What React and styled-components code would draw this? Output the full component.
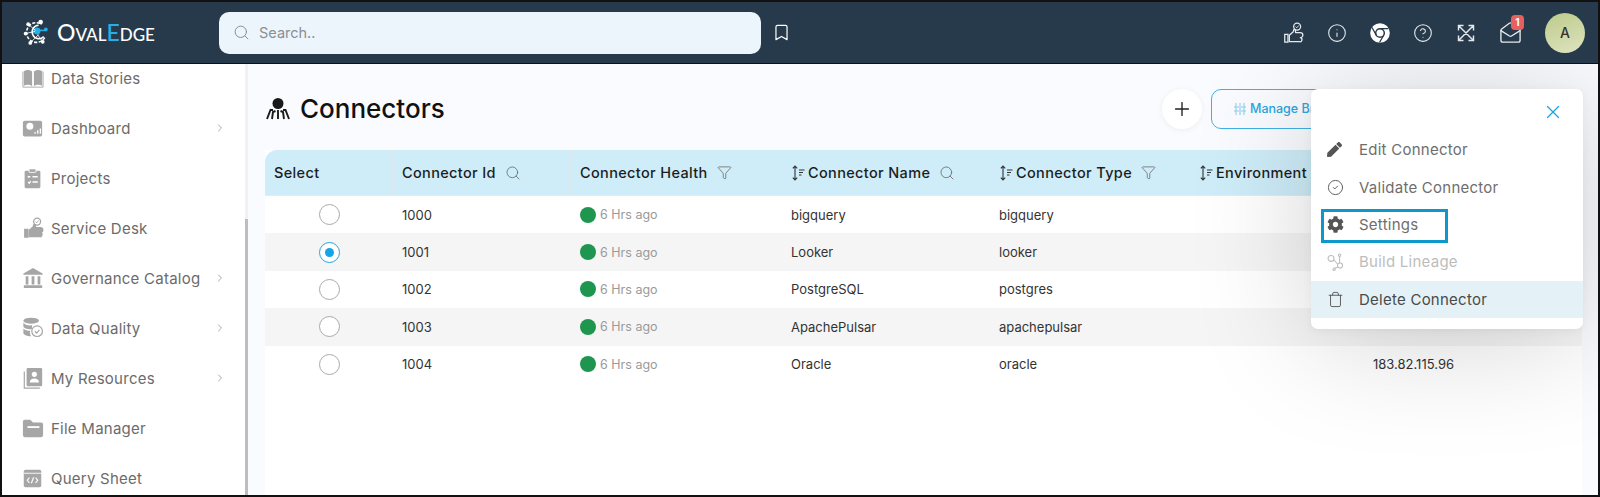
import styled, { createGlobalStyle } from "styled-components";
import {
	Search,
	Bookmark,
	Info,
	CircleHelp,
	MailOpen,
	ChevronRight,
	Plus,
	X,
	Funnel,
	CircleCheck,
	Trash,
} from "lucide-react";
import { FaCog, FaPen } from "react-icons/fa";

const GlobalStyle = createGlobalStyle`
	html, body {
		margin: 0;
		height: 100%;
	}
	body {
		font-family: "Inter", "Open Sans", sans-serif;
		background: #fff;
	}
	* { box-sizing: border-box; }
`;

const Page = styled.div`
	width: 1600px;
	height: 497px;
	border: 2px solid #111;
	display: flex;
	flex-direction: column;
	overflow: hidden;
	position: relative;
`;

const TopBar = styled.header`
	height: 62px;
	flex: none;
	background: #273a4b;
	border-bottom: 1px solid #111;
	display: flex;
	align-items: center;
	padding: 0 13px 0 21px;
	position: relative;
	z-index: 2;
`;

const Logo = styled.div`
	width: 196px;
	display: flex;
	align-items: center;
	gap: 7px;
	color: #fff;
	font-size: 17px;
	font-weight: 500;
	font-family: "Lato", sans-serif;
`;

const LogoBig = styled.span`
	font-size: 23px;
	line-height: 1;
	color: ${(p) => p.$color || "#fff"};
`;

const SearchBox = styled.div`
	width: 542px;
	height: 42px;
	background: #edf5fc;
	border-radius: 10px;
	display: flex;
	align-items: center;
	gap: 9px;
	padding: 0 14px;
	color: #8a8f94;
	font-size: 14.5px;
`;

const BookmarkWrap = styled.div`
	margin-left: 11px;
	display: flex;
	color: #fff;
`;

const TopIcons = styled.div`
	margin-left: auto;
	display: flex;
	align-items: center;
	gap: 23px;
	color: #e6e9ec;
`;

const MailWrap = styled.div`
	position: relative;
	display: flex;
`;

const Badge = styled.span`
	position: absolute;
	top: -6px;
	right: -2px;
	width: 13px;
	height: 15px;
	border-radius: 4px;
	background: #e5605f;
	color: #fff;
	font-size: 10px;
	font-weight: 700;
	text-align: center;
	line-height: 15px;
`;

const Avatar = styled.div`
	width: 40px;
	height: 40px;
	border-radius: 50%;
	background: linear-gradient(160deg, #bccb8b, #dfe3bf);
	color: #333;
	font-size: 14px;
	font-weight: 500;
	display: flex;
	align-items: center;
	justify-content: center;
`;

const Body = styled.div`
	flex: 1;
	display: flex;
	min-height: 0;
`;

const Sidebar = styled.nav`
	width: 246px;
	flex: none;
	background: #fff;
	display: flex;
	overflow: hidden;
`;

const NavList = styled.div`
	flex: 1;
	min-width: 0;
	margin-top: -11px;
`;

const ScrollTrack = styled.div`
	width: 3px;
	flex: none;
	background: #f0f1f3;
	padding-top: 155px;
`;

const ScrollThumb = styled.div`
	height: 100%;
	background: #bdbdbd;
`;

const NavItem = styled.div`
	height: 50px;
	display: flex;
	align-items: center;
	padding: 0 19px 0 20px;
	color: #6b6b6b;
	font-size: 15px;
	letter-spacing: 0.25px;
`;

const NavIcon = styled.span`
	width: 29px;
	display: flex;
`;

const NavLabel = styled.span`
	flex: 1;
`;

const Main = styled.main`
	flex: 1;
	min-width: 0;
	background: #fafbfe;
	padding: 22px 0 0 17px;
	position: relative;
	overflow: hidden;
`;

const TitleRow = styled.div`
	height: 45px;
	display: flex;
	align-items: center;
	gap: 9px;
`;

const Title = styled.h1`
	margin: 0;
	font-size: 26px;
	font-weight: 500;
	color: #111;
`;

const TitleActions = styled.div`
	margin-left: auto;
	display: flex;
	align-items: center;
	gap: 9px;
	width: 436px;
`;

const RoundButton = styled.div`
	width: 40px;
	height: 40px;
	border-radius: 50%;
	background: #fff;
	box-shadow: 0 1px 6px rgba(0, 0, 0, 0.06);
	display: flex;
	align-items: center;
	justify-content: center;
	color: #222;
`;

const ManageButton = styled.div`
	width: 200px;
	height: 40px;
	border: 1px solid #3fb1e5;
	border-radius: 10px;
	display: flex;
	align-items: center;
	gap: 3px;
	padding-left: 21px;
	color: #2aa7e1;
	font-size: 12.5px;
	font-weight: 500;
	white-space: nowrap;
`;

const Table = styled.div`
	margin-top: 19px;
	width: 1317px;
	background: #fff;
	min-height: 400px;
`;

const columns = "128px 178px 211px 208px 200px 174px 218px";

const HeadRow = styled.div`
	display: grid;
	grid-template-columns: ${columns};
	height: 46px;
	background: #ceedf9;
	border-radius: 12px 0 0 0;
	border-bottom: 1px solid #e8eaec;
`;

const HeadCell = styled.div`
	display: flex;
	align-items: center;
	gap: 3px;
	padding-left: 9px;
	border-right: 1px solid #dfe8ec;
	color: #1d1d1d;
	font-size: 14.5px;
	font-weight: 450;
	letter-spacing: 0.35px;
	white-space: nowrap;
`;

const HeadIcon = styled.span`
	display: flex;
	margin-left: 6px;
	color: #6d6d6d;
`;

const Row = styled.div`
	display: grid;
	grid-template-columns: ${columns};
	height: 37.4px;
	background: ${(p) => (p.$odd ? "#f5f5f5" : "#fff")};
	align-items: center;
	color: #333;
	font-size: 13px;
`;

const Cell = styled.div`
	padding-left: 9px;
`;

const RadioCell = styled.div`
	display: flex;
	justify-content: center;
`;

const Radio = styled.span`
	width: 21px;
	height: 21px;
	border-radius: 50%;
	border: 1px solid ${(p) => (p.$on ? "#1ea7e4" : "#a9a9a9")};
	background: #fff;
	display: flex;
	align-items: center;
	justify-content: center;
	&::after {
		content: "";
		width: 9px;
		height: 9px;
		border-radius: 50%;
		background: ${(p) => (p.$on ? "#12a5e8" : "transparent")};
	}
`;

const Health = styled.div`
	display: flex;
	align-items: center;
	gap: 4px;
	padding-left: 9px;
	color: #9a9a9a;
	font-size: 12.5px;
`;

const Dot = styled.span`
	width: 16px;
	height: 16px;
	border-radius: 50%;
	background: #1f9650;
`;

const Menu = styled.div`
	position: absolute;
	top: 87px;
	left: 1309px;
	width: 272px;
	height: 240px;
	background: #fff;
	border-radius: 7px;
	box-shadow: 0 10px 120px rgba(0, 0, 0, 0.18), 0 2px 10px rgba(0, 0, 0, 0.05);
	display: flex;
	flex-direction: column;
	padding-top: 42px;
	z-index: 1;
`;

const CloseWrap = styled.div`
	position: absolute;
	top: 12px;
	right: 19px;
	display: flex;
	color: #1aa5e2;
`;

const MenuItem = styled.div`
	height: 37.4px;
	display: flex;
	align-items: center;
	gap: 12px;
	padding-left: 16px;
	font-size: 15px;
	letter-spacing: 0.25px;
	color: ${(p) => (p.$disabled ? "#bdbdbd" : p.$hover ? "#4a4a4a" : "#6e6e6e")};
	background: ${(p) => (p.$hover ? "#e4f2f8" : "transparent")};
`;

const MenuIcon = styled.span`
	width: 20px;
	display: flex;
	color: ${(p) => (p.$disabled ? "#bdbdbd" : "#555")};
`;

const Highlight = styled.div`
	position: absolute;
	left: 10px;
	top: 120px;
	width: 127px;
	height: 34px;
	border: 3px solid #0e97cb;
	pointer-events: none;
`;

const GRAY = "#a6a6a6";

function SpiderIcon() {
	return (
		<svg width="26" height="24" viewBox="0 0 26 24" fill="none" stroke="#1a1a1a" strokeWidth="1.9">
			<circle cx="13" cy="6.5" r="5.5" fill="#1a1a1a" stroke="none" />
			<path d="M8 13H5.5L2 22M10.5 14L8 15l-1 7M15.5 14l2.500 1 1 7M18 13h2.500L24 22M13 13v9" />
		</svg>
	);
}

function LogoMark() {
	return (
		<svg width="27" height="27" viewBox="0 0 26 26" fill="none" stroke="#fff" strokeWidth="1.5">
			<path d="M21 18a9.500 9.500 0 11-3-13" strokeDasharray="3 1.400" />
			<path d="M20 17a6.500 6.500 0 11-5-11" />
			<circle cx="13.500" cy="11.500" r="3.300" fill="#27aee4" stroke="none" />
			<circle cx="22" cy="10" r="1.800" fill="#27aee4" stroke="none" />
			<path d="M14 11h8" stroke="#27aee4" />
			<circle cx="17" cy="3" r="2.200" fill="#fff" stroke="none" />
			<circle cx="5" cy="5" r="1.800" fill="#fff" stroke="none" />
			<circle cx="2.500" cy="14" r="1.800" fill="#fff" stroke="none" />
			<circle cx="7" cy="23" r="1.800" fill="#fff" stroke="none" />
			<circle cx="19" cy="22" r="1.800" fill="#fff" stroke="none" />
			<path d="M5 5l7 6M2.500 14l9-2M7 23l8-8M19 22l-5-7" strokeWidth="0.8" />
		</svg>
	);
}

function HandIcon({ color = GRAY, filled = true, size = 22 }) {
	return (
		<svg width={size} height={size} viewBox="0 0 24 24" fill={filled ? color : "none"} stroke={color} strokeWidth="1.400">
			<path d="M3 13.500h3.500V22H3z" />
			<path d="M8 14.500l4-3.500 1-3 1.500.5.300 3H20a1.300 1.300 0 010 5.500 1.300 1.300 0 01-1 4.500H8z" strokeLinejoin="round" />
			<circle cx="16.500" cy="5" r="3.800" fill="none" />
			<path d="M14.800 5l1.300 1.300 2.200-2.500" fill="none" strokeWidth="1" />
		</svg>
	);
}

function ChromeIcon() {
	return (
		<svg width="20" height="20" viewBox="0 0 20 20">
			<circle cx="10" cy="10" r="9.800" fill="#fff" />
			<circle cx="10" cy="10" r="4.300" fill="#fff" stroke="#273a4b" strokeWidth="1.500" />
			<path d="M10 5.700h8.500M13.700 12.200L9.500 19.500M6.300 12.200L2 4.500" stroke="#273a4b" strokeWidth="1.300" fill="none" />
		</svg>
	);
}

function ExpandIcon() {
	return (
		<svg width="20" height="20" viewBox="0 0 24 24" fill="none" stroke="#e6e9ec" strokeWidth="1.700">
			<path d="M3 9V3h6M15 3h6v6M21 15v6h-6M9 21H3v-6M3 3l18 18M21 3L3 21" />
		</svg>
	);
}

function BookIcon() {
	return (
		<svg width="22" height="22" viewBox="0 0 24 24" fill={GRAY}>
			<path d="M2 4.500C5 2.800 8.500 3 11 5v16c-2.500-1.800-6-2-9-.6z" />
			<path d="M22 4.500C19 2.800 15.500 3 13 5v16c2.500-1.800 6-2 9-.6z" />
			<path d="M1 5v17h22V5" fill="none" stroke={GRAY} strokeWidth="1" />
		</svg>
	);
}

function DashIcon() {
	return (
		<svg width="21" height="21" viewBox="0 0 24 24">
			<rect x="1" y="3" width="22" height="18" rx="2" fill={GRAY} />
			<circle cx="9" cy="9.500" r="4" fill="#fff" />
			<path d="M15 18v-2M18 18v-4M21 18v-6" stroke="#fff" strokeWidth="1.500" />
		</svg>
	);
}

function ClipboardIcon() {
	return (
		<svg width="21" height="21" viewBox="0 0 24 24">
			<rect x="3" y="3" width="18" height="20" rx="1.500" fill={GRAY} />
			<rect x="8" y="1" width="8" height="4" rx="1" fill={GRAY} stroke="#fff" strokeWidth="1" />
			<path d="M6.500 10h3M12 10h6M7 16l1.300 1.300L10 15M12 16h6" stroke="#fff" strokeWidth="1.500" fill="none" />
		</svg>
	);
}

function BankIcon() {
	return (
		<svg width="22" height="22" viewBox="0 0 24 24" fill={GRAY}>
			<path d="M12 1L1.500 7v1.500h21V7z" />
			<path d="M4 10h3v9H4zM10.500 10h3v9h-3zM17 10h3v9h-3zM2 20h20v3H2z" />
		</svg>
	);
}

function QualityIcon() {
	return (
		<svg width="22" height="22" viewBox="0 0 24 24">
			<ellipse cx="10" cy="4" rx="8.500" ry="3.300" fill={GRAY} />
			<path d="M1.500 6v4c0 2 4 3.300 8 3.300.5 0 1 0 1.500-.1V9C7 9.600 3 8.500 1.500 6zM1.500 12.500v5c0 2 4 3.500 8.500 3.500-1.500-2-1.800-4.500-1-6-3 0-6.500-.8-7.500-2.500z" fill={GRAY} />
			<circle cx="16.500" cy="15.500" r="5.800" fill="#fff" stroke={GRAY} strokeWidth="1.300" />
			<path d="M14 15.500l2 2 3-3.500" stroke={GRAY} strokeWidth="1.300" fill="none" />
		</svg>
	);
}

function ResourceIcon() {
	return (
		<svg width="22" height="22" viewBox="0 0 24 24">
			<path d="M2.500 5v18h17" fill="none" stroke={GRAY} strokeWidth="1.300" />
			<rect x="5" y="1" width="17" height="20" rx="1.500" fill={GRAY} />
			<circle cx="13.500" cy="8" r="2.800" fill="#fff" />
			<path d="M8.500 17c0-3 2-4.500 5-4.500s5 1.500 5 4.500z" fill="#fff" />
		</svg>
	);
}

function FolderIcon() {
	return (
		<svg width="22" height="22" viewBox="0 0 24 24">
			<path d="M1 5a2 2 0 012-2h6l3 3h9a2 2 0 012 2v12a2 2 0 01-2 2H3a2 2 0 01-2-2z" fill={GRAY} />
			<path d="M6 11h13" stroke="#fff" strokeWidth="2" />
		</svg>
	);
}

function CodeSheetIcon() {
	return (
		<svg width="21" height="21" viewBox="0 0 24 24">
			<rect x="2" y="2" width="20" height="20" rx="2" fill={GRAY} />
			<path d="M2 6h20" stroke="#fff" strokeWidth="1" />
			<path d="M8.500 11L6 14l2.500 3M15.500 11l2.500 3-2.500 3M13.300 10.500l-2.600 7" stroke="#fff" strokeWidth="1.300" fill="none" />
		</svg>
	);
}

function SortIcon() {
	return (
		<svg width="14" height="16" viewBox="0 0 14 16" fill="none" stroke="#333" strokeWidth="1.100">
			<path d="M4 1v14M1.800 3.300L4 1l2.200 2.300M1.800 12.700L4 15l2.200-2.300" />
			<path d="M8 5h5.500M8 7.500h4M8 10h2.500" />
		</svg>
	);
}

function BarsIcon() {
	return (
		<svg width="14" height="14" viewBox="0 0 14 14" fill="none" stroke="#8fd0ee" strokeWidth="1.100">
			<path d="M3 1v12M7 1v12M11 1v12M1 5h5M8 5h5M1 9h5M8 9h5" />
		</svg>
	);
}

function LineageIcon() {
	return (
		<svg width="18" height="18" viewBox="0 0 20 20" fill="none" stroke="#bdbdbd" strokeWidth="1.200">
			<circle cx="4.500" cy="6" r="3.300" />
			<circle cx="14.500" cy="14" r="2.800" />
			<circle cx="14" cy="2.500" r="1.300" />
			<circle cx="8" cy="18" r="1.300" />
			<path d="M7.500 7.500l4.500 5M14 4v7M12 15.500l-3 1.500" />
		</svg>
	);
}

const navItems = [
	{ label: "Data Stories", icon: BookIcon },
	{ label: "Dashboard", icon: DashIcon, more: true },
	{ label: "Projects", icon: ClipboardIcon },
	{ label: "Service Desk", icon: HandIcon },
	{ label: "Governance Catalog", icon: BankIcon, more: true },
	{ label: "Data Quality", icon: QualityIcon, more: true },
	{ label: "My Resources", icon: ResourceIcon, more: true },
	{ label: "File Manager", icon: FolderIcon },
	{ label: "Query Sheet", icon: CodeSheetIcon },
];

const rows = [
	{ id: "1000", name: "bigquery", type: "bigquery" },
	{ id: "1001", name: "Looker", type: "looker", on: true },
	{ id: "1002", name: "PostgreSQL", type: "postgres" },
	{ id: "1003", name: "ApachePulsar", type: "apachepulsar" },
	{ id: "1004", name: "Oracle", type: "oracle", ip: "183.82.115.96" },
];

export default function App() {
	return (
		<>
			<GlobalStyle />
			<Page>
				<TopBar>
					<Logo>
						<LogoMark />
						<span>
							<LogoBig>O</LogoBig>VAL<LogoBig $color="#27aee4">E</LogoBig>DGE
						</span>
					</Logo>
					<SearchBox>
						<Search size={17} strokeWidth={1.4} />
						Search..
					</SearchBox>
					<BookmarkWrap>
						<Bookmark size={19} strokeWidth={1.5} />
					</BookmarkWrap>
					<TopIcons>
						<HandIcon color="#e6e9ec" filled={false} size={22} />
						<Info size={20} strokeWidth={1.3} />
						<ChromeIcon />
						<CircleHelp size={20} strokeWidth={1.3} />
						<ExpandIcon />
						<MailWrap>
							<MailOpen size={23} strokeWidth={1.4} />
							<Badge>1</Badge>
						</MailWrap>
						<Avatar>A</Avatar>
					</TopIcons>
				</TopBar>
				<Body>
					<Sidebar>
						<NavList>
							{navItems.map((item) => (
								<NavItem key={item.label}>
									<NavIcon>
										<item.icon />
									</NavIcon>
									<NavLabel>{item.label}</NavLabel>
									{item.more && <ChevronRight size={12} color="#a8a8a8" />}
								</NavItem>
							))}
						</NavList>
						<ScrollTrack>
							<ScrollThumb />
						</ScrollTrack>
					</Sidebar>
					<Main>
						<TitleRow>
							<SpiderIcon />
							<Title>Connectors</Title>
							<TitleActions>
								<RoundButton>
									<Plus size={22} strokeWidth={1.5} />
								</RoundButton>
								<ManageButton>
									<BarsIcon />
									Manage Bridge
								</ManageButton>
							</TitleActions>
						</TitleRow>
						<Table>
							<HeadRow>
								<HeadCell>Select</HeadCell>
								<HeadCell>
									Connector Id
									<HeadIcon>
										<Search size={16} strokeWidth={1.3} />
									</HeadIcon>
								</HeadCell>
								<HeadCell>
									Connector Health
									<HeadIcon>
										<Funnel size={15} strokeWidth={1.3} />
									</HeadIcon>
								</HeadCell>
								<HeadCell>
									<SortIcon />
									Connector Name
									<HeadIcon>
										<Search size={16} strokeWidth={1.3} />
									</HeadIcon>
								</HeadCell>
								<HeadCell>
									<SortIcon />
									Connector Type
									<HeadIcon>
										<Funnel size={15} strokeWidth={1.3} />
									</HeadIcon>
								</HeadCell>
								<HeadCell>
									<SortIcon />
									Environment
								</HeadCell>
								<HeadCell />
							</HeadRow>
							{rows.map((row, i) => (
								<Row key={row.id} $odd={i % 2 === 1}>
									<RadioCell>
										<Radio $on={row.on} />
									</RadioCell>
									<Cell>{row.id}</Cell>
									<Health>
										<Dot />6 Hrs ago
									</Health>
									<Cell>{row.name}</Cell>
									<Cell>{row.type}</Cell>
									<Cell />
									<Cell>{row.ip}</Cell>
								</Row>
							))}
						</Table>
					</Main>
				</Body>
				<Menu>
					<CloseWrap>
						<X size={22} strokeWidth={1.4} />
					</CloseWrap>
					<MenuItem>
						<MenuIcon>
							<FaPen size={15} />
						</MenuIcon>
						Edit Connector
					</MenuItem>
					<MenuItem>
						<MenuIcon>
							<CircleCheck size={17} strokeWidth={1.3} />
						</MenuIcon>
						Validate Connector
					</MenuItem>
					<MenuItem>
						<MenuIcon>
							<FaCog size={17} />
						</MenuIcon>
						Settings
					</MenuItem>
					<MenuItem $disabled>
						<MenuIcon $disabled>
							<LineageIcon />
						</MenuIcon>
						Build Lineage
					</MenuItem>
					<MenuItem $hover>
						<MenuIcon>
							<Trash size={17} strokeWidth={1.3} />
						</MenuIcon>
						Delete Connector
					</MenuItem>
					<Highlight />
				</Menu>
			</Page>
		</>
	);
}
